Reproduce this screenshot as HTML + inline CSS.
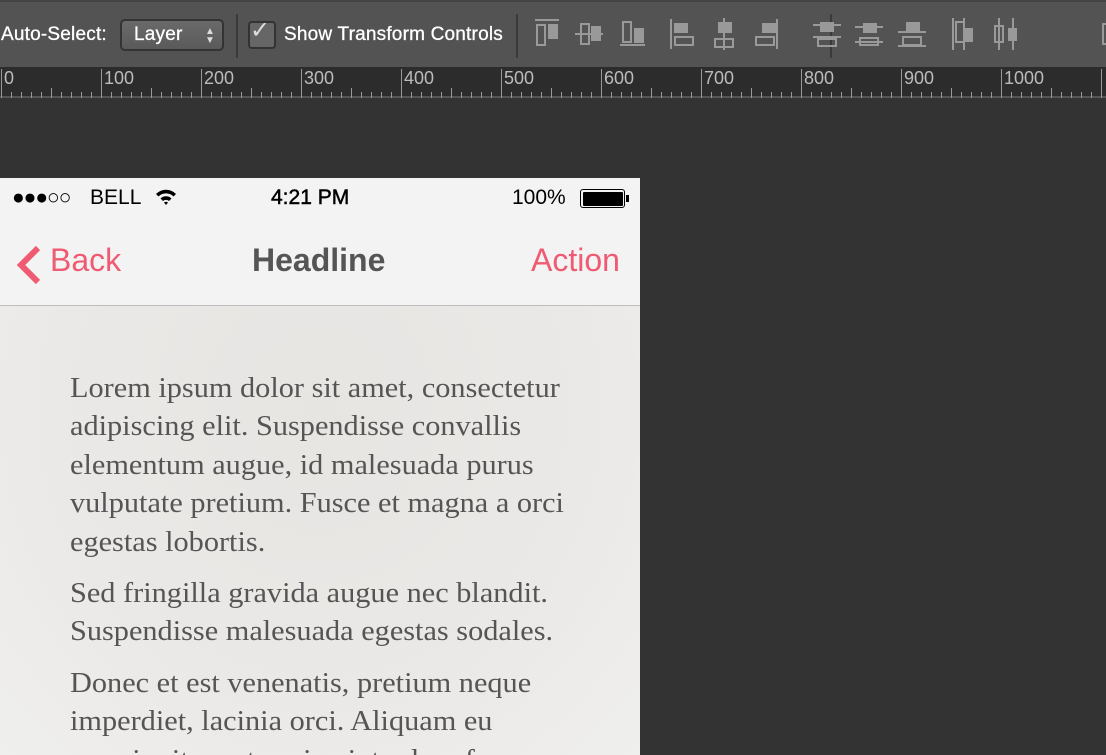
<!DOCTYPE html>
<html><head><meta charset="utf-8"><style>
*{margin:0;padding:0;box-sizing:border-box}
html,body{width:1106px;height:755px;overflow:hidden}
body{background:#333;font-family:"Liberation Sans",sans-serif;position:relative}
#tb{position:absolute;left:0;top:0;width:1106px;height:67px;background:#535353;border-top:2px solid #444}
#ruler{position:absolute;left:0;top:67px;width:1106px;height:31px;background:#2c2c2c;border-bottom:2px solid #555}
.t{position:absolute;color:#fff;font-size:19px;letter-spacing:0.2px;-webkit-text-stroke:0.3px #fff}
.rn{position:absolute;top:1px;color:#bbb;font-size:18px;font-family:"Liberation Sans",sans-serif}
#phone{position:absolute;left:0;top:178px;width:640px;height:577px;overflow:hidden;background:radial-gradient(ellipse at 50% 40%,#e7e5e2 0%,#ebe9e7 60%,#efefee 100%)}
#nav{position:absolute;left:0;top:0;width:640px;height:128px;background:#f3f3f3;border-bottom:1px solid #bdbdbd}
.st{position:absolute;top:8px;font-size:21px;color:#000}
.body{position:absolute;left:70px;top:191px;font-family:"Liberation Serif",serif;font-size:29px;color:#555;line-height:38.4px;white-space:nowrap;transform:scaleX(1.045);transform-origin:0 0}
.body p{margin-bottom:13px}
</style></head><body>
<div id="tb">
 <div class="t" style="left:1px;top:22px">Auto-Select:</div>
 <div style="position:absolute;left:120px;top:17px;width:104px;height:32px;border:2px solid #333;border-radius:5px;background:linear-gradient(#6a6a6a,#5a5a5a)"></div>
 <div class="t" style="left:134px;top:22px">Layer</div>
 <div style="position:absolute;left:205px;top:25px;color:#ddd;font-size:10px;line-height:9px">▲<br>▼</div>
 <div style="position:absolute;left:236px;top:12px;width:2px;height:44px;background:#3a3a3a"></div>
 <div style="position:absolute;left:248px;top:19px;width:28px;height:28px;border:2px solid #333;border-radius:4px;background:#666"></div>
 <div style="position:absolute;left:250px;top:14px;color:#ddd;font-size:24px">✓</div>
 <div class="t" style="left:284px;top:22px">Show Transform Controls</div>
 <div style="position:absolute;left:516px;top:12px;width:2px;height:44px;background:#3a3a3a"></div>
 <div style="position:absolute;left:830px;top:12px;width:2px;height:44px;background:#3a3a3a"></div>
 <svg style="position:absolute;left:520px;top:0" width="586" height="67" fill="none" stroke="#999" stroke-width="2">
  <path d="M15 18h24M17 23h8v20h-8z"/><rect x="29" y="23" width="8" height="13" fill="#999"/>
  <path d="M55 32h28M61 22h8v20h-8z"/><rect x="72" y="25" width="8" height="13" fill="#999"/>
  <path d="M100 43h25M103 20h8v20h-8z"/><rect x="115" y="27" width="8" height="13" fill="#999"/>
  <path d="M151 17v30M155 35h18v8h-18z"/><rect x="155" y="22" width="12" height="8" fill="#999"/>
  <path d="M204 16v32M195 37h18v8h-18z"/><rect x="199" y="21" width="12" height="9" fill="#999"/>
  <path d="M257 17v30M236 35h18v8h-18z"/><rect x="243" y="22" width="12" height="8" fill="#999"/>
  <path d="M293 23h28M293 35h28M298 37h18v7h-18z"/><rect x="301" y="21" width="12" height="8" fill="#999"/>
  <path d="M335 25h28M335 40h28M340 36h18v7h-18z"/><rect x="344" y="22" width="12" height="8" fill="#999"/>
  <path d="M378 30h28M378 44h28M383 35h18v8h-18z"/><rect x="387" y="21" width="12" height="8" fill="#999"/>
  <path d="M433 16v32M444 16v32M436 20h8v20h-8z"/><rect x="446" y="27" width="6" height="12" fill="#999"/>
  <path d="M479 16v32M493 16v32M475 24h8v16h-8z"/><rect x="489" y="27" width="7" height="11" fill="#999"/>
  <path d="M583 22h8v20h-8z"/>
 </svg>
</div>
<div id="ruler">
 <svg style="position:absolute;left:0;top:0" width="1106" height="31" stroke="#999" stroke-width="1">
  <g id="tk"></g>
 </svg>
 <div class="rn" style="left:4px">0</div><div class="rn" style="left:104px">100</div><div class="rn" style="left:204px">200</div><div class="rn" style="left:304px">300</div><div class="rn" style="left:404px">400</div><div class="rn" style="left:504px">500</div><div class="rn" style="left:604px">600</div><div class="rn" style="left:704px">700</div><div class="rn" style="left:804px">800</div><div class="rn" style="left:904px">900</div><div class="rn" style="left:1004px">1000</div>
</div>
<script>
var g=document.getElementById('tk'),s='';
for(var x=0;x<1106;x+=10){var m=x%100==0,h=x%50==0;var y1=m?2:(h?21:25);s+='<line x1="'+(x+1.5)+'" y1="'+y1+'" x2="'+(x+1.5)+'" y2="31"/>';}
g.innerHTML=s;
</script>
<div id="phone">
 <div id="nav">
  <div class="st" style="left:12px;letter-spacing:-1px">●●●○○</div>
  <div class="st" style="left:90px">BELL</div>
  <svg style="position:absolute;left:155px;top:10px" width="22" height="18"><path d="M1 6a14 14 0 0 1 20 0l-2.5 2.5a10.5 10.5 0 0 0-15 0z M5.5 10.5a8 8 0 0 1 11 0l-2.5 2.5a4.5 4.5 0 0 0-6 0z M9 14.5a3 3 0 0 1 4 0L11 17z" fill="#000"/></svg>
  <div class="st" style="left:271px;-webkit-text-stroke:0.5px #000">4:21 PM</div>
  <div class="st" style="left:512px">100%</div>
  <div style="position:absolute;left:580px;top:11px;width:45px;height:19px;border:1.5px solid #000;border-radius:3px;padding:1.5px"><div style="width:100%;height:100%;background:#000;border-radius:1px"></div></div>
  <div style="position:absolute;left:626px;top:17px;width:3px;height:7px;background:#000"></div>
  <svg style="position:absolute;left:14px;top:66px" width="28" height="42"><path d="M24 4L7 21l17 17" stroke="#ef5b72" stroke-width="6" fill="none"/></svg>
  <div style="position:absolute;left:50px;top:64px;font-size:32px;color:#ef5b72">Back</div>
  <div style="position:absolute;left:252px;top:64px;font-size:32px;color:#555;font-weight:bold;letter-spacing:0px">Headline</div>
  <div style="position:absolute;left:531px;top:64px;font-size:32px;color:#ef5b72">Action</div>
 </div>
 <div class="body">
  <p>Lorem ipsum dolor sit amet, consectetur<br>adipiscing elit. Suspendisse convallis<br>elementum augue, id malesuada purus<br>vulputate pretium. Fusce et magna a orci<br>egestas lobortis.</p>
  <p>Sed fringilla gravida augue nec blandit.<br>Suspendisse malesuada egestas sodales.</p>
  <p>Donec et est venenatis, pretium neque<br>imperdiet, lacinia orci. Aliquam eu<br>mauris sit amet sapien interdum ferme</p>
 </div>
</div>
</body></html>
